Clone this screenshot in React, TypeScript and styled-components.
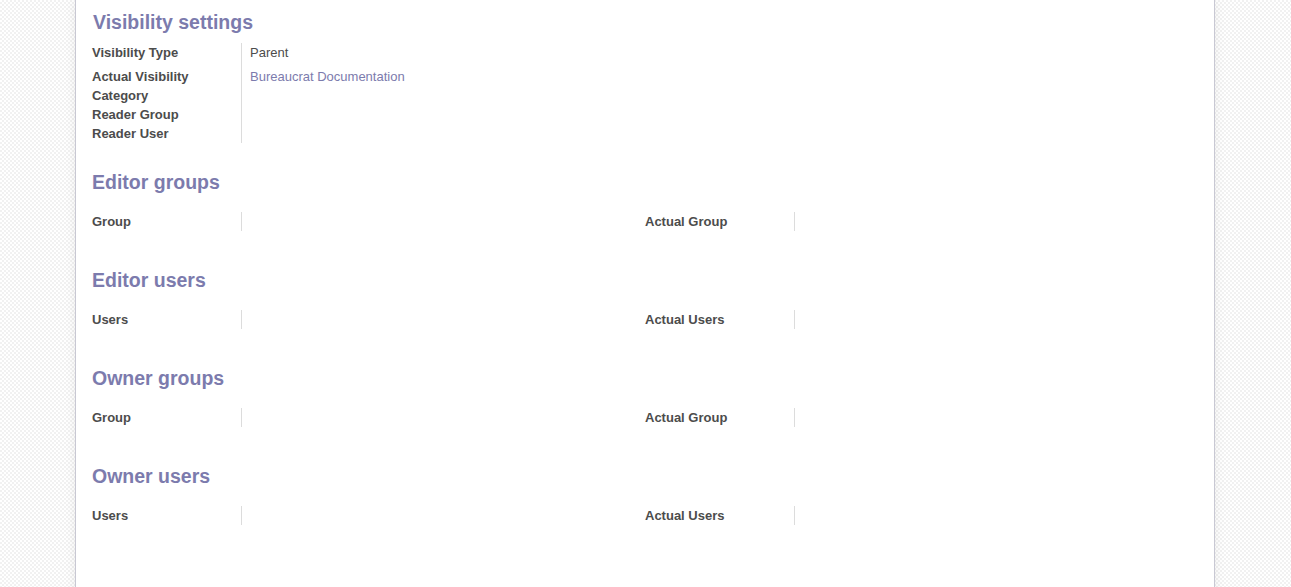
import React from "react";
import styled, { createGlobalStyle } from "styled-components";

const Global = createGlobalStyle`
  html, body { margin: 0; padding: 0; }
  body {
    font-family: "Liberation Sans", Arial, Helvetica, sans-serif;
    font-size: 13px;
    color: #4c4c4c;
    background-color: #ffffff;
    background-image: repeating-conic-gradient(#f1f1f1 0 25%, #ffffff 0 50%);
    background-size: 4px 4px;
  }
`;

const Page = styled.div`
  height: 587px;
  overflow: hidden;
  display: flex;
  justify-content: center;
`;

const Sheet = styled.div`
  width: 1106px;
  margin-left: -1px;
  padding: 0 16px 40px 16px;
  background: #ffffff;
  border-left: 1px solid #c8c8d3;
  border-right: 1px solid #c8c8d3;
  box-shadow: 0 0 10px rgba(0, 0, 0, 0.08);
  min-height: 587px;
  box-sizing: content-box;
`;

const Title = styled.div<{ $top: number; $bottom: number }>`
  font-size: 19.5px;
  line-height: 28px;
  font-weight: bold;
  color: #7c7bad;
  margin-top: ${(p) => p.$top}px;
  margin-bottom: ${(p) => p.$bottom}px;
  padding-left: ${(p) => (p.$top < 10 ? 1 : 0)}px;
`;

const FieldTable = styled.div`
  display: grid;
  grid-template-columns: 150px 1fr;
`;

const LabelCell = styled.div<{ $pad: number }>`
  font-weight: bold;
  line-height: 19px;
  border-right: 1px solid #dcdcdc;
  padding-bottom: ${(p) => p.$pad}px;
  display: flex;
  flex-direction: column;
`;

const ValueCell = styled.div<{ $link?: boolean }>`
  line-height: 19px;
  padding-left: 8px;
  color: ${(p) => (p.$link ? "#7c7bad" : "#4c4c4c")};
`;

const TwoCols = styled.div`
  display: grid;
  grid-template-columns: 1fr 1fr;
`;

const Section = styled.div`
  display: flex;
  flex-direction: column;
`;

function Pair({ label }: { label: string }) {
  return (
    <FieldTable>
      <LabelCell $pad={0}>{label}</LabelCell>
      <ValueCell />
    </FieldTable>
  );
}

const sections: [string, string, string][] = [
  ["Editor groups", "Group", "Actual Group"],
  ["Editor users", "Users", "Actual Users"],
  ["Owner groups", "Group", "Actual Group"],
  ["Owner users", "Users", "Actual Users"],
];

export default function App() {
  return (
    <>
      <Global />
      <Page>
        <Sheet>
          <Title $top={8} $bottom={7}>Visibility settings</Title>
          <FieldTable>
            <LabelCell $pad={5}>Visibility Type</LabelCell>
            <ValueCell>Parent</ValueCell>
            <LabelCell $pad={0}>
              <span>Actual Visibility</span>
              <span>Category</span>
              <span>Reader Group</span>
              <span>Reader User</span>
            </LabelCell>
            <ValueCell $link>Bureaucrat Documentation</ValueCell>
          </FieldTable>
          {sections.map(([t, a, b], i) => (
            <Section key={t}>
              <Title $top={i === 0 ? 25 : 35} $bottom={16}>{t}</Title>
              <TwoCols>
                <Pair label={a} />
                <Pair label={b} />
              </TwoCols>
            </Section>
          ))}
        </Sheet>
      </Page>
    </>
  );
}
